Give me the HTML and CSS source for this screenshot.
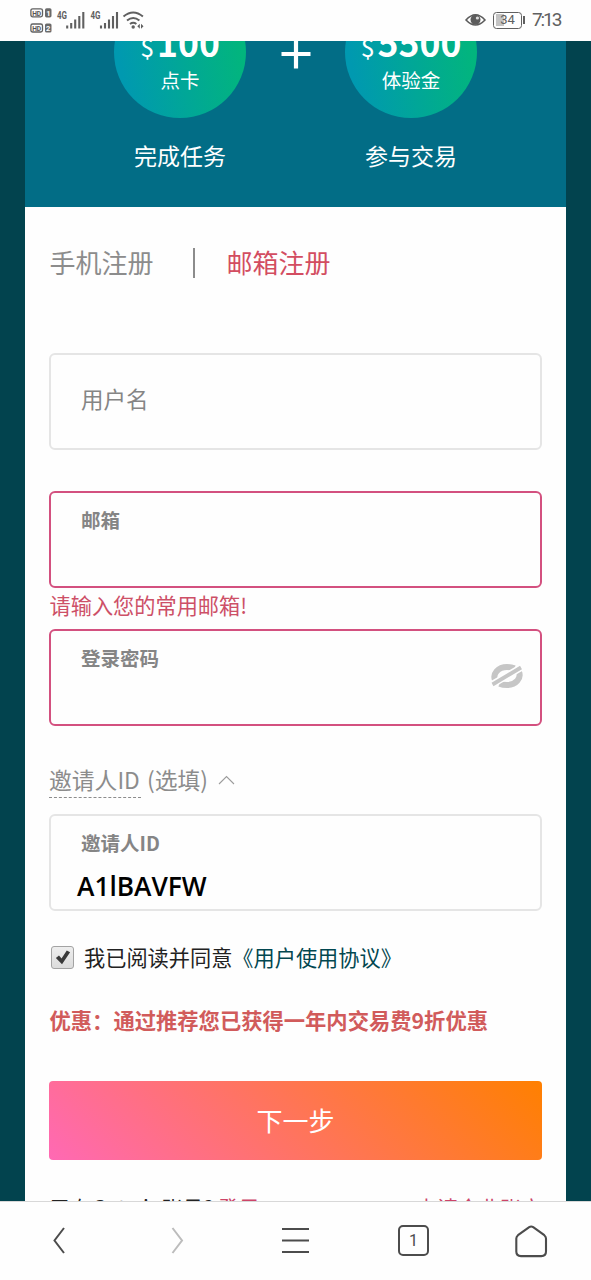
FILE: index.html
```html
<!DOCTYPE html>
<html lang="zh-CN">
<head>
<meta charset="utf-8">
<title>邮箱注册</title>
<link rel="stylesheet" href="styles.css">
</head>
<body>
<div class="screen">
  <header class="status">
    <svg class="status-left" width="120" height="30" viewBox="0 0 120 30">
      <g fill="none" stroke="#606060" stroke-width="1.3">
        <rect x="0.9" y="3.8" width="11.6" height="8" rx="1.8"/>
        <rect x="0.9" y="19" width="11.6" height="8" rx="1.8"/>
      </g>
      <g fill="#6a6a6a">
        <rect x="15" y="3.2" width="6.5" height="9.2" rx="1.6"/>
        <rect x="15" y="18.4" width="6.5" height="9.2" rx="1.6"/>
      </g>
      <g class="badge-text">
        <text x="2.2" y="10.5" fill="#555" textLength="9" lengthAdjust="spacingAndGlyphs">HD</text>
        <text x="2.2" y="25.7" fill="#555" textLength="9" lengthAdjust="spacingAndGlyphs">HD</text>
        <text x="16.3" y="10.5" fill="#fff">1</text>
        <text x="16.1" y="25.7" fill="#fff">2</text>
      </g>
      <g class="net-text" fill="#606060">
        <text x="27" y="14" textLength="10" lengthAdjust="spacingAndGlyphs">4G</text>
        <text x="60.500" y="14" textLength="10" lengthAdjust="spacingAndGlyphs">4G</text>
      </g>
      <g stroke="#606060" stroke-width="2.1">
        <path d="M37.200 20.500v3M41.200 18v5.500M45.200 14.500v9M49.300 11v12.500M53.300 7v16.500"/>
        <path d="M71 20.500v3M75 18v5.500M79 14.500v9M83 11v12.500M87 7v16.500"/>
      </g>
      <g fill="none" stroke="#606060" stroke-width="2">
        <path d="M93.500 11.500q9.700-8 19.400 0"/>
        <path d="M97 15.500q6.200-5 12.400 0"/>
        <path d="M100 19q3.200-2.300 6.400 0"/>
      </g>
      <circle cx="103.200" cy="22" r="1.700" fill="#606060"/>
      <path d="M109.800 18.800l-2.500 2.500 2.500 2.500zM111 18.800l2.500 2.500-2.500 2.500z" fill="#606060"/>
    </svg>
    <div class="status-right">
      <svg width="21" height="16" viewBox="0 0 21 16">
        <path d="M1 8Q10.500-2.500 20 8Q10.500 18 1 8Z" fill="none" stroke="#5c5c5c" stroke-width="1.600"/>
        <circle cx="10.500" cy="7.800" r="5" fill="#5c5c5c"/>
        <circle cx="12.400" cy="6" r="1.600" fill="#ddd"/>
      </svg>
      <div class="battery"><span class="battery-level">34</span></div>
      <i class="battery-tip"></i>
      <span class="clock">7:13</span>
    </div>
  </header>

  <main class="page">
    <div class="card">
      <section class="hero">
        <div class="reward">
          <div class="bubble">
            <div class="amount"><small>$</small>100</div>
            <div class="kind">点卡</div>
          </div>
          <div class="task">完成任务</div>
        </div>
        <svg class="plus" width="30" height="30" viewBox="0 0 30 30"><path d="M15 0v29.500M0.500 15h29" stroke="#fff" stroke-width="4.200"/></svg>
        <div class="reward">
          <div class="bubble">
            <div class="amount"><small>$</small>5500</div>
            <div class="kind">体验金</div>
          </div>
          <div class="task">参与交易</div>
        </div>
      </section>

      <form class="form">
        <nav class="tabs">
          <span class="tab">手机注册</span>
          <i class="tab-divider"></i>
          <span class="tab active">邮箱注册</span>
        </nav>
        <div class="field username"><span class="placeholder">用户名</span></div>
        <div class="field invalid"><label class="label">邮箱</label></div>
        <p class="error">请输入您的常用邮箱!</p>
        <div class="field invalid password">
          <label class="label">登录密码</label>
          <svg class="eye-off" width="32" height="26" viewBox="0 0 32 26">
            <g fill="none" stroke="#c6c6c6" stroke-width="6">
              <path d="M4 17C1.500 11 7 4 16 4C19.500 4 21.500 4.500 23.500 5.300"/>
              <path d="M28 9C30.500 15 25 22 16 22C12.500 22 10.500 21.500 8.500 20.700"/>
            </g>
            <path d="M1 21.500L31 4" stroke="#fff" stroke-width="7"/>
            <path d="M1.500 21.500L30 4.500" stroke="#c6c6c6" stroke-width="3.800"/>
          </svg>
        </div>
        <div class="invite">
          <span class="invite-term">邀请人ID</span><span class="invite-note">(选填)</span>
          <svg width="17" height="10" viewBox="0 0 17 10"><path d="M1 9L8.500 1.500L16 9" fill="none" stroke="#9c9c9c" stroke-width="1.100"/></svg>
        </div>
        <div class="field invite-field">
          <label class="label">邀请人ID</label>
          <span class="value">A1lBAVFW</span>
        </div>
        <div class="agree">
          <span class="checkbox">
            <svg width="20" height="20" viewBox="0 0 20 20"><path d="M3 10.500l3.300-2.700 2.700 3.200 5.500-8.300 3.500 1.800L9.500 17z" fill="#3a3a3a"/></svg>
          </span>
          <span>我已阅读并同意</span><a class="terms">《用户使用协议》</a>
        </div>
        <p class="promo">优惠：通过推荐您已获得一年内交易费9折优惠</p>
        <div class="submit">下一步</div>
        <div class="links">
          <span>已有Gate.io账号? <a>登录</a></span>
          <a>申请企业账户</a>
        </div>
      </form>
    </div>
  </main>

  <footer class="browser-bar">
    <svg width="118" height="78" viewBox="0 0 118 78"><path d="M64 26L54.500 38.500L64 51" fill="none" stroke="#4c4c4c" stroke-width="2"/></svg>
    <svg width="118" height="78" viewBox="0 0 118 78"><path d="M54.500 26L64 38.500L54.500 51" fill="none" stroke="#bcbcbc" stroke-width="2"/></svg>
    <svg width="118" height="78" viewBox="0 0 118 78"><path d="M46 27h27M46 38.500h27M46 50h27" fill="none" stroke="#4c4c4c" stroke-width="2"/></svg>
    <div class="tab-slot"><span class="tab-count">1</span></div>
    <svg width="118" height="78" viewBox="0 0 118 78"><path d="M57.200 25.200L46 33.200Q44.300 34.600 44.300 36.600V49.600Q44.300 54.100 49 54.100H69.300Q74 54.100 74 49.600V36.600Q74 34.600 72.300 33.200L61.200 25.200Q59.200 23.800 57.200 25.200Z" fill="none" stroke="#4c4c4c" stroke-width="2.100"/></svg>
  </footer>
</div>
</body>
</html>
```

FILE: styles.css
```css
* { box-sizing: border-box; }
body { margin: 0; font-family: "Noto Sans CJK SC", sans-serif; }
p { margin: 0; }
svg { display: block; flex: none; }

.screen {
  width: 591px;
  height: 1280px;
  display: flex;
  flex-direction: column;
  overflow: hidden;
  background: #fff;
}

.status {
  flex: none;
  height: 41px;
  padding: 5px 31px 6px 30px;
  display: flex;
  justify-content: space-between;
  background: #fefefe;
}
.badge-text { font: bold 7.5px Roboto, sans-serif; }
.net-text { font: bold 10px Roboto, sans-serif; }
.status-right { display: flex; align-items: center; color: #606060; }
.status-right > svg { margin-right: 1px; }
.battery {
  width: 29px;
  height: 17px;
  margin-left: 6px;
  padding: 1.5px;
  border: 1.6px solid #606060;
  border-radius: 3.5px;
}
.battery-level {
  display: block;
  height: 100%;
  font: 400 13px/11px Roboto, sans-serif;
  text-align: center;
  background: linear-gradient(90deg, #c4c4c4 34%, transparent 34%);
}
.battery-tip { width: 2px; height: 8px; margin-left: 1px; background: #606060; }
.clock {
  width: 28px;
  margin-left: 7px;
  font: 19px/34px Roboto, sans-serif;
  letter-spacing: -2.1px;
  white-space: nowrap;
}

.page {
  flex: none;
  height: 1160px;
  padding: 0 25px;
  overflow: hidden;
  background: #02434e;
}
.card { background: #fefefe; height: 1160px; }

.hero {
  height: 166px;
  display: flex;
  justify-content: center;
  color: #fff;
  background: #026d86;
  overflow: hidden;
}
.reward { width: 132px; margin-top: -55px; }
.bubble {
  height: 132px;
  padding-top: 33px;
  border-radius: 50%;
  text-align: center;
  background: linear-gradient(80deg, #0099b0 10%, #02b57d 90%);
}
.amount { font: bold 35.5px/46px "Noto Sans CJK SC", sans-serif; white-space: nowrap; }
.amount small { font-size: 25px; font-weight: 400; margin-right: 3px; }
.kind { font-size: 19.5px; line-height: 22px; }
.task { margin-top: 21px; font-size: 23px; line-height: 32px; text-align: center; }
.plus { margin: -2px 34px 0 35px; }

.form { padding: 34px 24px 0 24px; }
.tabs { height: 40px; padding-left: 0.5px; display: flex; align-items: center; font-size: 26px; color: #8c8c8c; }
.tab-divider { width: 2px; height: 30px; margin: 3px 32px 0 39px; background: #8c8c8c; }
.tab.active { color: #d34d61; }

.field {
  height: 97px;
  padding: 17px 17px 0 30px;
  border: 2px solid #e5e5e5;
  border-radius: 6px;
  color: #858585;
}
.username { margin: 72px 0 41px; padding-top: 26px; font-size: 22.5px; line-height: 34px; }
.invalid { border-color: #d3507f; }
.label { display: block; font-size: 19.5px; line-height: 20px; font-weight: 700; }
.error { height: 41px; padding-left: 0.5px; font-size: 21.2px; line-height: 33px; color: #cd5067; }
.password { display: flex; justify-content: space-between; }
.eye-off { margin-top: 15px; }

.invite {
  height: 88px;
  padding: 38px 0 18px 0;
  display: flex;
  font-size: 22.8px;
  line-height: 31px;
  color: #8c8c8c;
}
.invite-term { width: 91.5px; height: 34px; border-bottom: 1.500px dashed #8c8c8c; }
.invite-note { margin-left: 6.5px; }
.invite svg { margin: 11px 0 0 10px; }
.value {
  display: block;
  margin: 18px 0 0 -4px;
  font: 600 26.3px/30px "Open Sans", sans-serif;
  color: #000;
}

.agree {
  margin-top: 30px;
  height: 32px;
  padding-left: 2px;
  display: flex;
  align-items: center;
  font-size: 21.2px;
  line-height: 30px;
  padding-bottom: 1px;
  color: #222;
}
.checkbox {
  width: 23px;
  height: 23px;
  margin: 1px 10px 0 0;
  padding: 1px;
  border: 1px solid #a3a3a3;
  border-radius: 3px;
  background: linear-gradient(#eee, #dcdcdc);
}
.checkbox svg { width: 19px; height: 19px; }
.terms { color: #024750; }
.promo {
  margin-top: 31px;
  padding-left: 0.5px;
  font-size: 21.3px;
  line-height: 32px;
  font-weight: 700;
  color: #d15b5b;
  white-space: nowrap;
}
.submit {
  margin-top: 45px;
  height: 79px;
  border-radius: 4px;
  font-size: 26px;
  line-height: 77px;
  text-align: center;
  color: #fff;
  background: linear-gradient(45deg, #ff69b4, #ff8000);
}
.links {
  margin-top: 32px;
  padding-left: 1px;
  display: flex;
  justify-content: space-between;
  font-size: 21px;
  line-height: 30px;
  color: #222;
}
.links a { color: #cd4468; }

.browser-bar {
  flex: none;
  height: 79px;
  display: flex;
  border-top: 1px solid #d8d8d8;
  background: #fefefe;
}
.tab-slot { width: 118px; padding: 23px 0 0 44px; }
.tab-count {
  display: block;
  width: 31px;
  height: 31px;
  border: 2px solid #4c4c4c;
  border-radius: 5px;
  font: 16px/27px Roboto, sans-serif;
  text-align: center;
  color: #4c4c4c;
}
```
